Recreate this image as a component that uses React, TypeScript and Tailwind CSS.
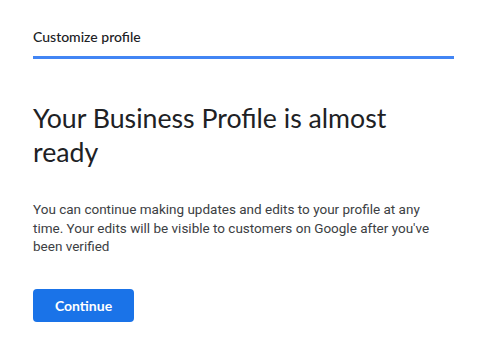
export default function App() {
  return (
    <div className="min-h-[363px] w-[501px] bg-white">
      <div className="ml-[33px] w-[421px] pt-[27px]">
        <div className="h-[32px] border-b-[3px] border-[#4285f4] font-['Lato',sans-serif] text-[14px] font-medium leading-[20px] text-[#202124]">
          Customize profile
        </div>
        <h1 className="mt-[42px] w-[380px] font-['Lato',sans-serif] text-[26.7px] leading-[34px] font-normal text-[#202124]">
          Your Business Profile is almost ready
        </h1>
        <p className="mt-[31px] w-[410px] font-['Roboto',sans-serif] text-[13.5px] leading-[18.5px] text-[#3c4043]">
          You can continue making updates and edits to your profile at any
          time. Your edits will be visible to customers on Google after you've
          been verified
        </p>
        <button className="mt-[33px] h-[33px] w-[101px] rounded-[4px] bg-[#1a73e8] font-['Lato',sans-serif] text-[14px] font-bold text-white">
          Continue
        </button>
      </div>
    </div>
  )
}
